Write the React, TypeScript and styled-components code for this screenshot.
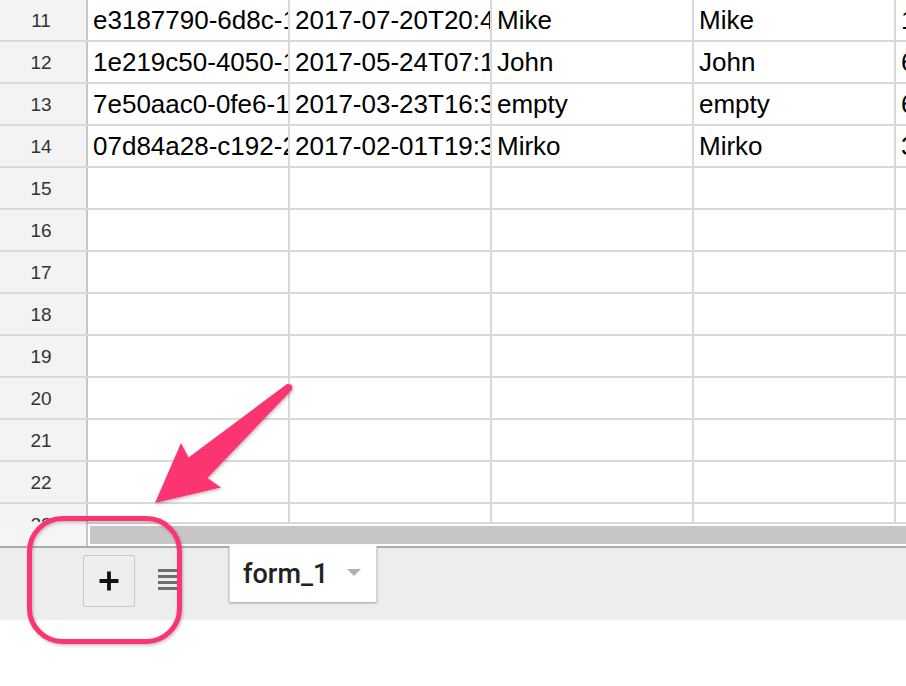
import React from "react";
import styled, { createGlobalStyle } from "styled-components";

const Global = createGlobalStyle`
  html, body { margin: 0; padding: 0; background: #ffffff; }
  body { font-family: "Liberation Sans", Arial, sans-serif; }
  * { box-sizing: border-box; }
`;

const Page = styled.div`
  position: relative;
  width: 906px;
  height: 686px;
  overflow: hidden;
  background: #ffffff;
`;

const Sheet = styled.div`
  display: flex;
  flex-direction: column;
  width: 906px;
`;

const GridViewport = styled.div`
  height: 522px;
  overflow: hidden;
`;

const Row = styled.div`
  display: flex;
  height: 42px;
  border-bottom: 2px solid #d9d9d9;
  overflow: hidden;
`;

const RowHeader = styled.div`
  flex: 0 0 88px;
  display: flex;
  align-items: center;
  justify-content: center;
  background: #f3f3f3;
  border-right: 2px solid #c6c6c6;
  color: #333333;
  font-size: 19px;
  padding-right: 4px;
  padding-top: 1px;
`;

const Cell = styled.div`
  flex: 0 0 202px;
  display: flex;
  align-items: center;
  padding-left: 5px;
  padding-top: 1px;
  border-right: 2px solid #d9d9d9;
  color: #000000;
  font-size: 26px;
  white-space: nowrap;
  overflow: hidden;
`;

const ScrollRow = styled.div`
  display: flex;
  height: 24px;
`;

const ScrollCorner = styled.div`
  flex: 0 0 88px;
  background: #f5f5f5;
  border-right: 2px solid #c6c6c6;
`;

const ScrollTrack = styled.div`
  flex: 1;
  border-top: 2px solid #d9d9d9;
  padding: 2px 0 2px 2px;
  background: #ffffff;
`;

const ScrollThumb = styled.div`
  height: 18px;
  background: #c6c6c6;
`;

const Footer = styled.div`
  display: flex;
  align-items: flex-start;
  height: 74px;
  padding-left: 83px;
  background: #ededed;
  border-top: 2px solid #acacac;
`;

const AddButton = styled.div`
  margin-top: 7px;
  width: 52px;
  height: 52px;
  display: flex;
  align-items: center;
  justify-content: center;
  border: 1px solid #c9c9c9;
  border-radius: 2px;
  background: #eeeeee;
`;

const ListIcon = styled.div`
  margin-left: 23px;
  margin-top: 21px;
  width: 22px;
  display: flex;
  flex-direction: column;
  gap: 3px;
`;

const ListBar = styled.div`
  height: 3px;
  background: #6e6e6e;
`;

const Tab = styled.div`
  margin-left: 49px;
  margin-top: -2px;
  width: 148px;
  height: 56px;
  display: flex;
  align-items: center;
  padding-left: 13px;
  background: #ffffff;
  border-left: 1px solid #d4d4d4;
  border-right: 1px solid #d4d4d4;
  box-shadow: 0 1px 2px rgba(0, 0, 0, 0.35);
`;

const TabLabel = styled.span`
  font-family: Roboto, "Liberation Sans", Arial, sans-serif;
  font-weight: 500;
  font-size: 27px;
  color: #222222;
  padding-bottom: 1px;
`;

const Caret = styled.div`
  margin-left: auto;
  margin-right: 15px;
  margin-bottom: 4px;
  width: 0;
  height: 0;
  border-left: 7px solid transparent;
  border-right: 7px solid transparent;
  border-top: 7px solid #b0b0b0;
`;

const Annotation = styled.svg`
  position: absolute;
  left: 0;
  top: 0;
  pointer-events: none;
`;

const rows: { n: number; cells: string[] }[] = [
  { n: 11, cells: ["e3187790-6d8c-11e7-9f1b", "2017-07-20T20:41:12", "Mike", "Mike", "1500583272"] },
  { n: 12, cells: ["1e219c50-4050-11e7-8a3c", "2017-05-24T07:15:33", "John", "John", "6495544"] },
  { n: 13, cells: ["7e50aac0-0fe6-11e7-b7d2", "2017-03-23T16:34:08", "empty", "empty", "6221183"] },
  { n: 14, cells: ["07d84a28-c192-2c4e-91aa", "2017-02-01T19:32:51", "Mirko", "Mirko", "3380021"] },
];

for (let n = 15; n <= 23; n++) rows.push({ n, cells: ["", "", "", "", ""] });

export default function App() {
  return (
    <Page>
      <Global />
      <Sheet>
        <GridViewport>
          {rows.map((r) => (
            <Row key={r.n}>
              <RowHeader>{r.n}</RowHeader>
              {r.cells.map((c, i) => (
                <Cell key={i}>{c}</Cell>
              ))}
            </Row>
          ))}
        </GridViewport>
        <ScrollRow>
          <ScrollCorner />
          <ScrollTrack>
            <ScrollThumb />
          </ScrollTrack>
        </ScrollRow>
        <Footer>
          <AddButton>
            <svg width="22" height="22" viewBox="0 0 22 22">
              <path d="M11 1.5 V20.5 M1.5 11 H20.5" stroke="#111" strokeWidth="3.8" />
            </svg>
          </AddButton>
          <ListIcon>
            <ListBar />
            <ListBar />
            <ListBar />
            <ListBar />
          </ListIcon>
          <Tab>
            <TabLabel>form_1</TabLabel>
            <Caret />
          </Tab>
        </Footer>
      </Sheet>
      <Annotation width="906" height="686" viewBox="0 0 906 686">
        <defs>
          <filter id="sh" x="-20%" y="-20%" width="140%" height="140%">
            <feDropShadow dx="1" dy="1.5" stdDeviation="1.5" floodColor="#000" floodOpacity="0.25" />
          </filter>
        </defs>
        <path
          d="M287 384 Q294 383.5 291.8 390 L207.5 478 L221 487.5 L155 503 L181 443 L188.5 457.5 Z"
          fill="#fb3570"
          filter="url(#sh)"
        />
        <rect
          x="29.5"
          y="518.5"
          width="150"
          height="123"
          rx="33"
          fill="none"
          stroke="#fb3570"
          strokeWidth="5"
          filter="url(#sh)"
        />
      </Annotation>
    </Page>
  );
}
